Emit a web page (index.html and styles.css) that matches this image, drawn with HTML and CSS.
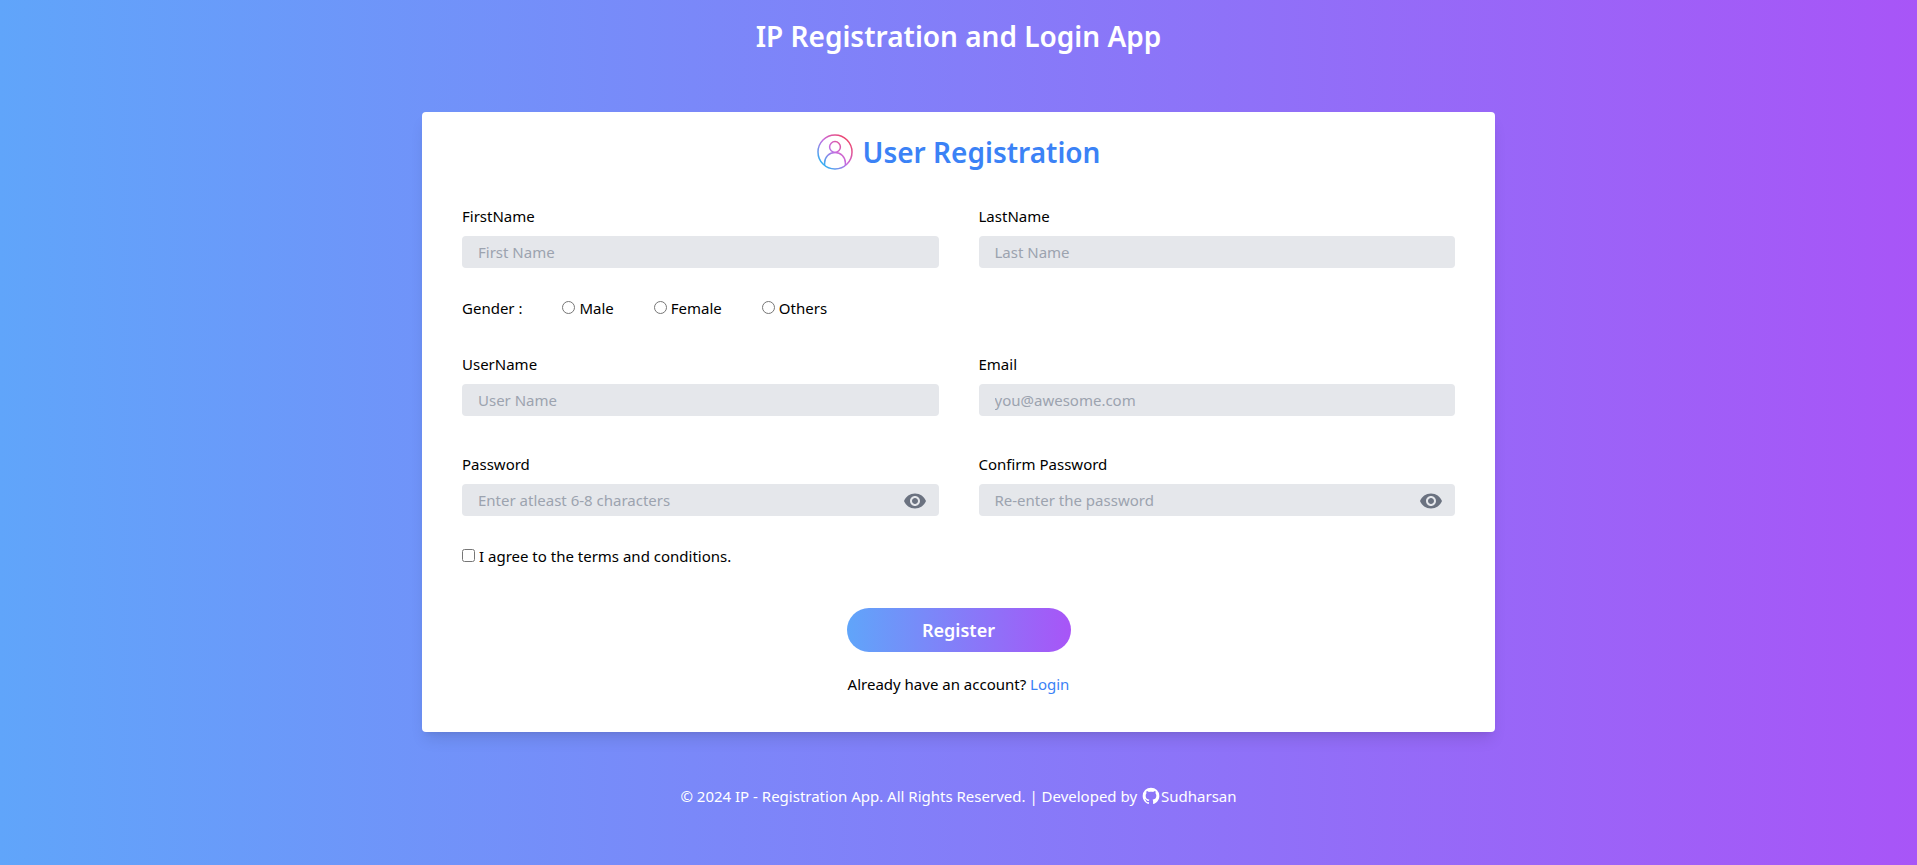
FILE: index.html
```html
<!DOCTYPE html>
<html lang="en">
<head>
<meta charset="utf-8">
<meta name="viewport" content="width=device-width, initial-scale=1">
<title>IP Registration and Login App</title>
<link rel="stylesheet" href="styles.css">
</head>
<body>
<header class="site-header">
  <h1 class="title">IP Registration and Login App</h1>
</header>
<main class="card">
  <div class="card-heading">
    <svg class="user-icon" viewBox="0 0 36 36" fill="none" stroke="url(#ring)" stroke-width="1.5" aria-hidden="true">
      <defs>
        <linearGradient id="ring" gradientUnits="userSpaceOnUse" x1="5" y1="31" x2="31" y2="5">
          <stop offset="0" stop-color="#2bb3f3"/>
          <stop offset="0.5" stop-color="#c86be0"/>
          <stop offset="1" stop-color="#ee4468"/>
        </linearGradient>
      </defs>
      <circle cx="18" cy="18" r="17"/>
      <circle cx="18" cy="13" r="5.4"/>
      <path d="M7.6 31.3V29C7.6 23 12.2 18.4 18 18.4S28.4 23 28.4 29v2.3"/>
    </svg>
    <h2 class="title">User Registration</h2>
  </div>
  <form class="form">
    <div class="row">
      <div class="field">
        <label for="first">FirstName</label>
        <input class="text-input" id="first" type="text" placeholder="First Name">
      </div>
      <div class="field">
        <label for="last">LastName</label>
        <input class="text-input" id="last" type="text" placeholder="Last Name">
      </div>
    </div>
    <div class="gender" role="radiogroup" aria-labelledby="gender-label">
      <span id="gender-label">Gender :</span>
      <label class="choice"><input type="radio" name="gender" value="male">Male</label>
      <label class="choice"><input type="radio" name="gender" value="female">Female</label>
      <label class="choice"><input type="radio" name="gender" value="others">Others</label>
    </div>
    <div class="row row-account">
      <div class="field">
        <label for="user">UserName</label>
        <input class="text-input" id="user" type="text" placeholder="User Name">
      </div>
      <div class="field">
        <label for="email">Email</label>
        <input class="text-input" id="email" type="email" placeholder="you@awesome.com">
      </div>
    </div>
    <div class="row">
      <div class="field">
        <label for="pass">Password</label>
        <div class="password">
          <input class="text-input" id="pass" type="password" placeholder="Enter atleast 6-8 characters">
          <button class="reveal" type="button" aria-label="Show password">
            <svg viewBox="0 0 24 24" fill="currentColor" aria-hidden="true"><path d="M12 4.5C7 4.5 2.73 7.61 1 12c1.73 4.39 6 7.5 11 7.5s9.27-3.11 11-7.5c-1.73-4.39-6-7.5-11-7.5zM12 17c-2.76 0-5-2.24-5-5s2.24-5 5-5 5 2.24 5 5-2.24 5-5 5zm0-8c-1.66 0-3 1.34-3 3s1.34 3 3 3 3-1.34 3-3-1.34-3-3-3z"/></svg>
          </button>
        </div>
      </div>
      <div class="field">
        <label for="confirm">Confirm Password</label>
        <div class="password">
          <input class="text-input" id="confirm" type="password" placeholder="Re-enter the password">
          <button class="reveal" type="button" aria-label="Show confirmed password">
            <svg viewBox="0 0 24 24" fill="currentColor" aria-hidden="true"><path d="M12 4.5C7 4.5 2.73 7.61 1 12c1.73 4.39 6 7.5 11 7.5s9.27-3.11 11-7.5c-1.73-4.39-6-7.5-11-7.5zM12 17c-2.76 0-5-2.24-5-5s2.24-5 5-5 5 2.24 5 5-2.24 5-5 5zm0-8c-1.66 0-3 1.34-3 3s1.34 3 3 3 3-1.34 3-3-1.34-3-3-3z"/></svg>
          </button>
        </div>
      </div>
    </div>
    <label class="choice terms"><input type="checkbox" name="terms">I agree to the terms and conditions.</label>
    <button class="register" type="submit">Register</button>
    <p class="login">Already have an account? <a href="#login">Login</a></p>
  </form>
</main>
<footer class="site-footer">
  <span>© 2024 IP - Registration App. All Rights Reserved. | Developed by</span>
  <a class="author" href="#author">
    <svg class="github" viewBox="0 0 24 24" fill="currentColor" aria-hidden="true"><path d="M12 2A10 10 0 0 0 2 12c0 4.42 2.87 8.17 6.84 9.5.5.08.66-.23.66-.5v-1.69c-2.77.6-3.36-1.34-3.36-1.34-.46-1.16-1.11-1.47-1.11-1.47-.91-.62.07-.6.07-.6 1 .07 1.53 1.03 1.53 1.03.87 1.52 2.34 1.07 2.91.83.09-.65.35-1.09.63-1.34-2.22-.25-4.55-1.11-4.55-4.92 0-1.11.38-2 1.03-2.71-.1-.25-.45-1.29.1-2.64 0 0 .84-.27 2.75 1.02.79-.22 1.65-.33 2.5-.33s1.71.11 2.5.33c1.91-1.29 2.75-1.02 2.75-1.02.55 1.35.2 2.39.1 2.64.65.71 1.03 1.6 1.03 2.71 0 3.82-2.34 4.66-4.57 4.91.36.31.69.92.69 1.85V21c0 .27.16.59.67.5C19.14 20.16 22 16.42 22 12A10 10 0 0 0 12 2z"/></svg>Sudharsan</a>
</footer>
</body>
</html>
```
FILE: styles.css
```css
* {
  box-sizing: border-box;
}

body {
  margin: 0;
  min-height: 100vh;
  padding: 16px;
  display: flex;
  flex-direction: column;
  align-items: center;
  background: linear-gradient(to right, #60a5fa, #a855f7);
  color: #000;
  font-family: "Segoe UI", "Noto Sans", "Open Sans", sans-serif;
  font-size: 15px;
  line-height: 24px;
}

.title {
  margin: 0;
  font-size: 28px;
  font-weight: 600;
  line-height: 40px;
}

.site-header {
  color: #fff;
  text-align: center;
}

.card {
  width: 100%;
  max-width: 1073px;
  margin: 56px 0 52px;
  padding: 20px 40px 36px;
  background: #fff;
  border-radius: 4px;
  box-shadow: 0 10px 15px -3px rgba(0, 0, 0, 0.1), 0 4px 6px -4px rgba(0, 0, 0, 0.1);
}

.card-heading {
  display: flex;
  justify-content: center;
  align-items: center;
  gap: 10px;
  margin-bottom: 32px;
  color: #3b82f6;
}

.user-icon {
  width: 36px;
  height: 36px;
}

.form {
  display: flex;
  flex-direction: column;
}

.row {
  display: grid;
  grid-template-columns: repeat(auto-fit, minmax(280px, 1fr));
  gap: 28px 40px;
}

.row-account {
  margin: 32px 0 36px;
}

.field {
  display: flex;
  flex-direction: column;
  gap: 8px;
}

.text-input {
  width: 100%;
  height: 32px;
  padding: 4px 16px;
  border: 0;
  border-radius: 4px;
  background: #e5e7eb;
  color: inherit;
  font: inherit;
}

.text-input::placeholder {
  color: #9ca3af;
}

.password {
  position: relative;
}

.reveal {
  position: absolute;
  top: 5px;
  right: 12px;
  width: 24px;
  height: 24px;
  padding: 0;
  border: 0;
  background: none;
  color: #6b7280;
  cursor: pointer;
}

.reveal svg {
  display: block;
}

.gender {
  display: flex;
  flex-wrap: wrap;
  gap: 8px 40px;
  margin-top: 28px;
}

.choice {
  display: flex;
  align-items: center;
  gap: 4px;
}

.choice input {
  width: 13px;
  height: 13px;
  margin: 0 0 2px;
}

.terms {
  align-self: flex-start;
  margin-top: 28px;
}

.register {
  align-self: center;
  width: 224px;
  margin: 40px 0 20px;
  padding: 8px;
  border: 0;
  border-radius: 22px;
  background: linear-gradient(to right, #60a5fa, #a855f7);
  color: #fff;
  font: inherit;
  font-size: 18px;
  font-weight: 600;
  line-height: 28px;
  cursor: pointer;
}

.login {
  margin: 0;
  text-align: center;
}

a {
  color: #3b82f6;
  text-decoration: none;
}

.site-footer {
  display: flex;
  flex-wrap: wrap;
  justify-content: center;
  gap: 4px;
  color: #fff;
}

.author {
  display: flex;
  align-items: center;
  color: inherit;
}

.github {
  width: 20px;
  height: 20px;
}
```
